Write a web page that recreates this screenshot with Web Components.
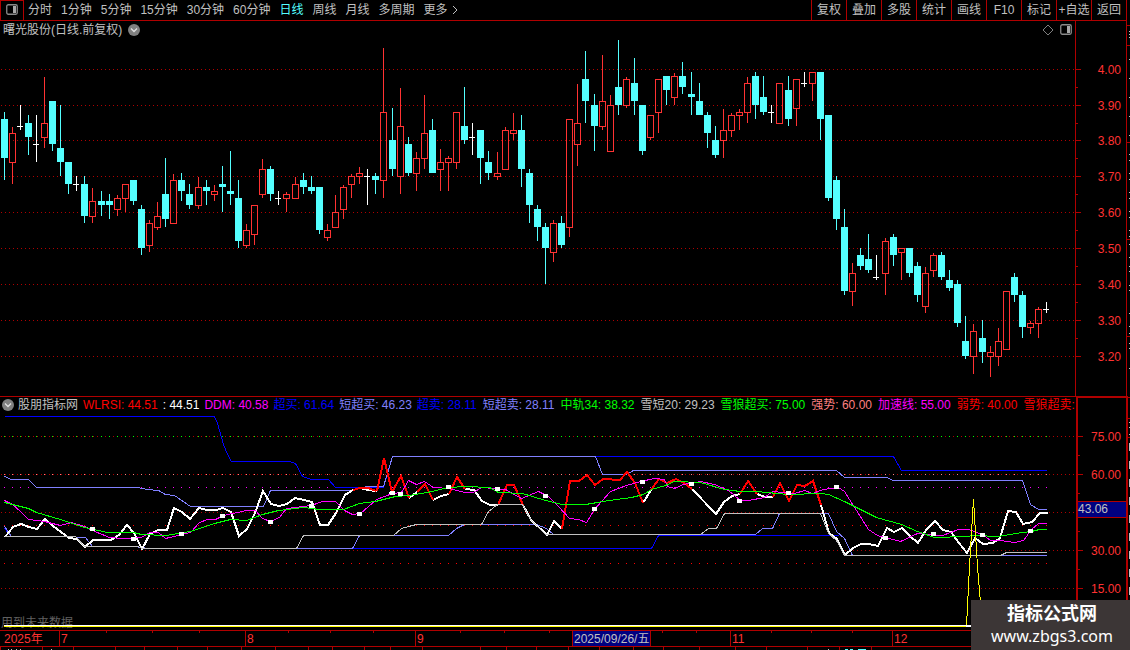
<!DOCTYPE html>
<html lang="zh-CN">
<head>
<meta charset="utf-8">
<title>曙光股份 日线</title>
<style>
  body { margin: 0; background: #000; color: #c0c0c0; font: 12px/16px "Liberation Sans", "Noto Sans CJK SC", sans-serif; }
</style>
</head>
<body>
<trade-terminal></trade-terminal>
<script>
const define = (name, html, setup) => customElements.define(name, class extends HTMLElement {
  connectedCallback() {
    if (this.shadowRoot) return;
    const root = this.attachShadow({ mode: 'open' });
    const t = document.createElement('template');
    t.innerHTML = html;
    root.append(t.content.cloneNode(true));
    if (setup) setup(this, root);
  }
});

/* ---------- small icons ---------- */
define('panel-icon', `
<style>:host{display:block;width:12px;height:11px}svg{display:block}</style>
<svg width="12" height="11"><rect x=".75" y=".75" width="10.5" height="9.5" rx="1.5" fill="none" stroke="#8a8a8a" stroke-width="1.3"/><rect x="7" y="2" width="3" height="7" fill="#a8a8a8"/></svg>`);

define('chevron-badge', `
<style>:host{display:block;width:12px;height:12px;flex:none}svg{display:block}</style>
<svg width="12" height="12"><circle cx="6" cy="6" r="6" fill="#808080"/><path d="M3 4.500 6 7.500 9 4.500" fill="none" stroke="#e0e0e0" stroke-width="1.3"/></svg>`);

define('diamond-icon', `
<style>:host{display:block;width:12px;height:12px}svg{display:block}</style>
<svg width="12" height="12"><path d="M6 1 11 6 6 11 1 6Z" fill="none" stroke="#808080"/></svg>`);

/* ---------- toolbar ---------- */
define('period-button', `
<style>
:host{display:block}
:host([selected]){color:#54ffff}
button{display:flex;align-items:center;gap:4px;background:none;border:0;padding:0;margin:0;font:inherit;color:inherit;white-space:nowrap}
</style>
<button type="button"><slot></slot></button>`);

define('tool-button', `
<style>
:host{display:block;width:34px;border-left:1px solid #b00000}
button{display:block;width:100%;height:100%;background:none;border:0;padding:0;font:inherit;color:inherit;white-space:nowrap}
</style>
<button type="button"><slot></slot></button>`);

define('tool-bar', `
<style>
:host{display:flex;height:20px;border-bottom:1px solid #b00000;justify-content:space-between}
.left,.periods,.tools{display:flex}
.box{box-sizing:border-box;width:24px;border:solid #b00000;border-width:1px 1px 0;display:flex;align-items:center;justify-content:center;background:none;padding:0 1px 3px 0}
.periods{align-items:center;gap:9px;padding-left:4px}
svg{display:block}
</style>
<div class="left">
  <button class="box" type="button" aria-label="面板"><panel-icon></panel-icon></button>
  <div class="periods">
    <period-button>分时</period-button><period-button>1分钟</period-button><period-button>5分钟</period-button>
    <period-button>15分钟</period-button><period-button>30分钟</period-button><period-button>60分钟</period-button>
    <period-button selected>日线</period-button><period-button>周线</period-button><period-button>月线</period-button>
    <period-button>多周期</period-button><period-button>更多<svg width="6" height="10"><path d="M1 1 5 5 1 9" fill="none" stroke="#c0c0c0"/></svg></period-button>
  </div>
</div>
<div class="tools">
  <tool-button>复权</tool-button><tool-button>叠加</tool-button><tool-button>多股</tool-button><tool-button>统计</tool-button><tool-button>画线</tool-button><tool-button>F10</tool-button><tool-button>标记</tool-button><tool-button>+自选</tool-button><tool-button>返回</tool-button>
</div>`);

/* ---------- value axis ---------- */
define('value-axis', `
<style>
:host{display:block;width:50px;border-left:1px solid #b00000;position:relative}
:host([heavy]){width:48px;border-left:2px solid #b00000;border-top:1px solid #b00000}
svg{display:block;width:100%;height:100%}
text{fill:#ff3232;text-anchor:end}
.tick{fill:#b00000}
.tag{position:absolute;left:0;right:0;top:103px;height:15px;line-height:15px;background:#000080;border:solid #b00000;border-width:1px 0}
</style>
<svg shape-rendering="crispEdges"></svg>`, (host, root) => {
  const svg = root.querySelector('svg');
  const right = host.hasAttribute('heavy') ? 43 : 45;
  let out = '';
  host.getAttribute('labels').split(' ').map(s => s.split('@')).forEach(([label, y]) => {
    out += `<rect class="tick" x="0" y="${y}" width="5" height="1"/><text x="${right}" y="${+y + 5}">${label}</text>`;
  });
  (host.getAttribute('minor') || '').split(' ').forEach(y => out += `<rect class="tick" x="0" y="${y}" width="2" height="1"/>`);
  svg.innerHTML = out;
  if (host.hasAttribute('tag')) root.append(Object.assign(document.createElement('div'), { className: 'tag', textContent: host.getAttribute('tag') }));
});

/* ---------- candles: kind (c falling, r rising, w flat), high, body top, body bottom, low ---------- */
const candles = `c112,119,158,180 r127,133,163,184 w105,126,126,130 c115,123,137,155 w115,144,144,162 r77,123,138,148 c101,101,144,151 c105,148,162,176 c162,162,184,194 w176,184,184,191
c176,184,216,223 r188,201,217,223 c191,201,205,216 c194,201,205,219 r195,198,210,216 r184,184,199,212 c180,180,201,205 c205,209,248,255 r220,223,246,252 r202,216,228,230
c158,194,219,227 r174,180,224,224 c173,180,191,201 c184,194,205,209 r177,187,206,209 c180,187,191,205 r185,191,195,201 c166,184,187,212 c151,191,194,205 c180,198,241,248
r224,230,246,248 r205,205,235,245 r159,169,195,198 c166,169,194,201 w191,198,198,205 r192,194,199,212 r177,184,199,199 c173,180,187,194 c176,187,191,194 c187,187,230,234
r224,230,238,241 r195,212,228,228 r185,187,210,219 r174,176,185,198 r167,173,177,184 w169,176,176,205 c173,176,180,194 r48,112,181,198 c108,140,169,176 r88,126,177,194
c137,144,173,176 r152,158,174,191 r95,133,159,169 c119,130,173,173 r149,162,170,191 r156,158,163,191 r112,112,163,169 c87,126,140,144 w123,137,137,155 c130,130,158,184
c151,162,173,180 r152,173,177,180 r127,130,170,170 r113,130,134,140 c115,130,169,187 c169,173,205,223 c205,209,227,241 c223,227,248,284 r220,223,253,262 c216,223,245,248
r119,119,228,237 r84,123,145,166 c51,79,101,123 c94,105,126,151 r55,101,127,130 r95,105,152,152 c40,87,105,115 r77,79,106,108 c58,83,101,115 c105,105,151,155
r115,115,138,140 r79,79,113,133 c76,76,90,105 r73,76,98,105 c62,76,87,94 c72,94,97,115 c83,101,115,115 c112,115,133,148 c126,140,155,158 r109,130,141,158
r113,115,131,137 r109,112,116,130 r77,83,113,123 c72,76,105,119 c76,97,112,115 w105,112,112,123 r83,83,124,124 c76,90,119,126 r79,79,109,126 w72,83,83,87
r72,72,84,101 c72,72,119,140 c115,115,198,201 c176,180,219,230 c209,227,291,295 r263,273,292,306 c248,255,266,270 c234,259,270,273 w255,277,277,280 r238,241,274,295
c234,237,255,266 r248,248,253,280 c248,248,273,277 c262,266,295,302 r267,273,307,313 r253,255,271,277 c252,255,277,280 c270,280,288,291 c280,284,323,327 c316,341,356,359
r324,331,357,374 c320,338,352,363 r346,352,357,377 r328,341,357,366 r291,291,350,350 c273,277,295,302 c291,295,327,338 r321,323,328,334 r307,309,324,338 w302,309,309,313`
  .split(/\s+/).map(s => [s[0], ...s.slice(1).split(',').map(Number)]);
const slot = i => Math.floor(1.045 + 8.0825 * i);

define('candle-chart', `
<style>:host{display:block}svg{display:block;width:100%;height:358px}</style>
<svg shape-rendering="crispEdges" role="img" aria-label="日线K线图"></svg>`, (host, root) => {
  let out = '<g transform="translate(0 -38)">';
  [69, 105, 140, 176, 212, 248, 284, 320, 356].forEach(y => out += `<line x1="1" x2="100%" y1="${y + .5}" y2="${y + .5}" stroke="#b00000" stroke-dasharray="1 3"/>`);
  candles.forEach(([k, hi, top, bot, lo], i) => {
    const x = slot(i), c = { c: '#54ffff', r: '#ff3232', w: '#fff' }[k];
    if (k === 'r') {
      out += `<path fill="${c}" d="M${x + 3} ${hi}h1V${top}h-1zM${x + 3} ${bot}h1V${lo}h-1z"/><rect x="${x + .5}" y="${top + .5}" width="6" height="${bot - top - 1}" fill="none" stroke="${c}"/>`;
    } else {
      out += `<rect x="${x + 3}" y="${hi}" width="1" height="${lo - hi}" fill="${c}"/>`;
      out += k === 'c' ? `<rect x="${x}" y="${top}" width="7" height="${bot - top}" fill="${c}"/>` : `<rect x="${x}" y="${top}" width="6" height="1" fill="${c}"/>`;
    }
  });
  root.querySelector('svg').innerHTML = out + '</g>';
});

define('price-pane', `
<style>
:host{display:flex}
.main{flex:1;min-width:0}
header{display:flex;align-items:center;height:17px;padding:0 3px;gap:6px}
.tools{margin-left:auto;display:flex;gap:6px;align-items:center}
</style>
<div class="main">
  <header><span>曙光股份(日线.前复权)</span><chevron-badge></chevron-badge><span class="tools"><diamond-icon></diamond-icon><panel-icon></panel-icon></span></header>
  <candle-chart></candle-chart>
</div>
<value-axis labels="4.00@48 3.90@84 3.80@119 3.70@155 3.60@191 3.50@227 3.40@263 3.30@299 3.20@335" minor="66 102 137 173 209 245 281 317"></value-axis>`);

/* ---------- indicator ---------- */
const lines = [
  ['#0000ff', 1, '4,416 214,416 217,423 223,444 227,454 231,461 289,461 295,463 302,476 311,479 328,479 335,487 383,487 392,456 893,456 901,470 1046,470'],
  ['#0000ff', 1, '4,528 11,536 65,536 85,537 92,546 135,546 147,548 651,548 658,535 838,535'],
  ['#8080ff', 1, '4,476 11,479 28,479 36,487 137,487 147,489 158,490 165,494 174,495 190,506 263,506 270,490 350,490 367,486 383,486 392,456 595,456 602,474 626,474 633,470 836,470 844,477 886,477 893,480 1022,480 1030,504 1038,509 1046,509'],
  ['#8080ff', 1, '4,526 11,536 65,536 85,537 92,546 135,546 147,548 352,548 359,535 448,535 456,528 464,524 536,524 546,528 553,534 755,534 762,528 772,528 779,513 828,513 836,531 844,538 852,555 1046,555'],
  ['#ffffff', 2, '4,536 12,526 20,523 28,526 36,528 44,518 52,525 60,531 68,537 76,538 84,546 92,539 110,539 118,534 126,524 133,532 141,548 149,533 157,529 166,529 173,507 181,511 189,518 198,507 206,509 215,509 222,507 230,511 238,535 246,528 254,512 262,490 270,503 278,505 286,503 294,497 303,499 311,501 319,524 327,524 335,512 344,494 352,489 359,487 367,489 376,490'],
  ['#ffffff', 2, '388,492 392,491'],
  ['#ffffff', 2, '408,497 416,491'],
  ['#ffffff', 2, '432,499 440,495 448,493'],
  ['#ffffff', 2, '464,488 473,489 481,500 489,504 497,504'],
  ['#ffffff', 2, '522,504 530,519 546,534 553,520 561,528'],
  ['#ffffff', 2, '642,502 650,489'],
  ['#ffffff', 2, '691,488 715,513 723,501 731,495 739,493'],
  ['#ffffff', 2, '756,493 764,496 772,496'],
  ['#ffffff', 2, '820,504 828,532 836,538 844,554 852,547 860,543 868,543 877,545 886,527 893,531 901,527 909,535 917,542 925,529 934,520 942,529 950,531 958,542 966,552 974,537 982,543 992,542 999,537 1007,510 1015,511 1022,523 1031,521 1039,512 1047,512'],
  ['#ff0000', 2, '352,489 359,487 367,487 375,490'],
  ['#ff0000', 2, '376,490 383,457 391,491 400,475 408,497'],
  ['#ff0000', 2, '416,491 424,483 432,499'],
  ['#ff0000', 2, '448,493 456,476 464,488'],
  ['#ff0000', 2, '497,504 506,484 513,484 522,504'],
  ['#ff0000', 2, '561,528 569,480 578,480 586,474 594,484 602,478 619,479 626,471 634,482 642,502'],
  ['#ff0000', 2, '650,489 658,478 666,482 675,478 683,482 691,488'],
  ['#ff0000', 2, '739,493 747,480 756,493'],
  ['#ff0000', 2, '772,496 779,482 788,500 796,484 804,485 812,480 820,504'],
  ['#c0c0c0', 1, '4,536 75,536 84,546 137,546 142,548 296,548 303,535 393,535 401,528 408,526 416,524 481,524 488,511 497,504 522,504 530,519 545,534 700,534 708,528 716,528 724,513 820,513 828,533 836,540 844,555 1000,555 1006,552 1046,552'],
  ['#ff00ff', 1, '4,500 12,504 20,511 28,519 44,521 60,525 71,522 84,526 92,530 109,537 122,538 141,537 149,532 158,532 165,538 190,532 199,522 207,519 215,519 223,515 246,510 255,510 262,518 270,521 279,517 286,508 311,505 322,501 335,501 344,510 352,514 360,513 376,499 392,493 401,492 408,480 416,484 424,481 433,487 449,488 464,492 473,492 481,487 505,489 521,498 538,491 548,496 558,506 569,518 578,519 586,522 594,509 610,491 626,485 640,481 654,478 664,479 667,486 674,488 683,484 700,481 714,484 728,490 740,500 748,500 764,497 772,491 794,493 804,490 812,493 823,489 838,487 844,491 868,529 877,535 900,541 917,533 942,535 950,532 958,529 968,529 982,534 990,540 1000,540 1014,542 1023,540 1031,529 1038,523 1046,523'],
  ['#00ff00', 1, '4,502 28,508 36,512 60,519 84,527 107,532 133,532 141,534 165,535 190,531 214,523 230,519 246,520 262,514 278,510 303,507 319,509 343,509 359,503 375,501 395,496 408,495 427,492 448,487 465,486 489,487 498,492 522,493 545,500 562,504 585,504 609,500 631,497 643,494 651,489 665,485 674,481 700,482 724,489 740,491 756,491 788,494 820,493 828,494 844,501 876,517 901,524 917,531 934,537 966,536 974,535 998,536 1015,533 1031,531 1039,529 1046,529'],
  ['#ffff00', 1, '966,626 969,566 973,499 977,566 982,626']
];
const marks = '92,528 133,538 181,533 222,515 270,521 311,505 359,513 392,492 400,493 448,486 497,488 545,495 594,508 642,481 691,483 739,500 788,492 836,486 885,537 933,533 982,534 1030,530';

define('indicator-chart', `
<style>:host{display:block}svg{display:block;width:100%;height:216px}text{fill:#606060}</style>
<svg shape-rendering="crispEdges" role="img" aria-label="指标图"></svg>`, (host, root) => {
  let out = '<g transform="translate(0 -414)">';
  [436, 474, 512, 550, 588].forEach(y => out += `<line x1="1" x2="100%" y1="${y + .5}" y2="${y + .5}" stroke="#b00000" stroke-dasharray="1 3"/>`);
  [[436, '#00ff00'], [474, '#ff8080'], [487, '#ff00ff'], [525, '#ff0000'], [563, '#ff0000']].forEach(([y, c]) => {
    candles.forEach((_, i) => out += `<rect x="${slot(i) + 3}" y="${y}" width="1" height="1" fill="${c}"/>`);
  });
  out += '<text x="1" y="627">用到未来数据</text>';
  lines.forEach(([c, w, pts]) => {
    const shifted = pts.split(' ').map(p => p.split(',').map(v => +v + w / 2).join()).join(' ');
    out += `<polyline points="${shifted}" fill="none" stroke="${c}" stroke-width="${w}"/>`;
  });
  marks.split(' ').forEach(p => { const [x, y] = p.split(','); out += `<rect x="${x - 2}" y="${y - 1}" width="5" height="4" fill="#fff"/>`; });
  out += '<rect x="4" y="625" width="1043" height="1" fill="#fff"/><rect x="966" y="626" width="81" height="1" fill="#fff"/><rect x="4" y="626" width="962" height="1" fill="#ff0"/>';
  root.querySelector('svg').innerHTML = out + '</g>';
});

define('legend-item', `<style>:host{display:block;white-space:nowrap}</style><slot></slot>`);

define('indicator-pane', `
<style>
:host{display:flex;border-top:1px solid #b00000}
.main{flex:1;min-width:0}
header,.bands,.levels{display:flex;align-items:center;gap:5px}
header{height:16px;padding:0 0 1px 2px;gap:6px;overflow:hidden}
.levels{gap:6px}
.name{display:flex;align-items:center;gap:4px;white-space:nowrap}
</style>
<div class="main">
  <header>
    <div class="bands">
      <span class="name"><chevron-badge></chevron-badge>股朋指标网</span>
      <legend-item style="color:#f00">WLRSI: 44.51</legend-item>
      <legend-item style="color:#fff">: 44.51</legend-item>
      <legend-item style="color:#f0f">DDM: 40.58</legend-item>
      <legend-item style="color:#00f">超买: 61.64</legend-item>
      <legend-item style="color:#8080ff">短超买: 46.23</legend-item>
      <legend-item style="color:#00f">超卖: 28.11</legend-item>
    </div>
    <div class="levels">
      <legend-item style="color:#8080ff">短超卖: 28.11</legend-item>
      <legend-item style="color:#0f0">中轨34: 38.32</legend-item>
      <legend-item style="color:#c0c0c0">雪短20: 29.23</legend-item>
      <legend-item style="color:#0f0">雪狼超买: 75.00</legend-item>
      <legend-item style="color:#ff8080">强势: 60.00</legend-item>
      <legend-item style="color:#f0f">加速线: 55.00</legend-item>
      <legend-item style="color:#f00">弱势: 40.00</legend-item>
      <legend-item style="color:#f00">雪狼超卖:</legend-item>
    </div>
  </header>
  <indicator-chart></indicator-chart>
</div>
<value-axis heavy tag="43.06" labels="75.00@38 60.00@76 30.00@152 15.00@190" minor="57 95 133 171 209"></value-axis>`);

/* ---------- date axis ---------- */
define('date-cell', `
<style>
:host{display:block;position:relative;box-sizing:border-box;border-left:1px solid #b00000;padding-left:1px;height:15px;line-height:16px;color:#ff3232;white-space:nowrap}
:host([first]){border-left:0;padding-left:4px}
:host([active]){background:#000080;color:#c0c0c0}
i{position:absolute;top:0;width:1px;height:2px;background:#b00000}
</style><slot></slot>`, (host, root) => {
  (host.getAttribute('ticks') || '').split(' ').filter(Boolean).forEach(x => {
    const i = document.createElement('i'); i.style.left = x + 'px'; root.append(i);
  });
});

define('date-axis', `
<style>
:host{display:grid;grid-template-columns:59px 186px 170px 157px 78px 80px 162px 1fr;border:solid #b00000;border-width:1px 0}
</style>
<date-cell first>2025年</date-cell><date-cell ticks="46 92 139">7</date-cell><date-cell ticks="42 84 127">8</date-cell><date-cell ticks="44 88 133">9</date-cell>
<date-cell active>2025/09/26/五</date-cell><date-cell ticks="11 45"></date-cell><date-cell ticks="40 80 121">11</date-cell><date-cell>12</date-cell>`);

define('status-strip', `
<style>:host{display:block}svg{display:block;width:100%;height:3px}</style><svg shape-rendering="crispEdges"></svg>`, (host, root) => {
  root.querySelector('svg').innerHTML = [0, 42, 73, 115, 144, 177, 207, 241, 275, 308, 332, 364, 390, 422, 480, 506, 536, 568, 599, 633, 663, 699, 735, 766, 807, 839, 871]
    .map(x => `<rect x="${x}" width="1" height="3" fill="#b00000"/>`).join('') +
    [8, 11, 16, 20, 51, 828].map(x => `<rect x="${x}" y="2" width="1" height="1" fill="#c0c0c0"/>`).join('') +
    [[845, 3], [850, 3], [858, 8]].map(([x, w]) => `<rect x="${x}" y="2" width="${w}" height="1" fill="#54ffff"/>`).join('');
});

/* ---------- edge of the neighbouring quote list ---------- */
define('quote-strip', `
<style>:host{display:block}svg{display:block;width:4px;height:650px}</style><svg shape-rendering="crispEdges"></svg>`, (host, root) => {
  let out = '<g fill="#b00000"><rect width="1" height="396"/><rect y="396" width="2" height="254"/>';
  [25, 45, 142, 239, 336, 397, 418, 437].forEach(y => out += `<rect y="${y}" width="4" height="1"/>`);
  out += '</g><g fill="#c0c0c0">';
  [31, 34, 37, 59, 78, 97, 116, 135, 154, 160, 173, 179, 192, 198, 211, 217, 230, 236, 244, 257, 266, 271, 285, 290, 313, 326, 333, 343, 348, 368, 422, 427, 434].forEach(y => out += `<rect x="3" y="${y}" width="1" height="1"/>`);
  for (let y = 443; y < 600; y += 18) out += `<rect x="3" y="${y}" width="1" height="8"/>`;
  root.querySelector('svg').innerHTML = out + '</g>';
});

define('water-mark', `
<style>
:host{position:fixed;right:0;bottom:0;box-sizing:border-box;width:159px;height:50px;padding:3px 0 0 3px;background:#3c3636;color:#fff;display:flex;flex-direction:column;align-items:center}
strong{font:700 18px/22px "Liberation Sans","Noto Sans CJK SC",sans-serif}
a{font:16px/22px "Noto Sans",sans-serif;color:inherit;text-decoration:none}
</style>
<strong>指标公式网</strong><a href="#">www.zbgs3.com</a>`);

define('trade-terminal', `
<style>
:host{display:grid;grid-template-columns:minmax(0,1fr) 4px;overflow:hidden}
main{min-width:0}
</style>
<main>
  <tool-bar></tool-bar>
  <price-pane></price-pane>
  <indicator-pane></indicator-pane>
  <date-axis></date-axis>
  <status-strip></status-strip>
</main>
<quote-strip></quote-strip>
<water-mark></water-mark>`);
</script>
</body>
</html>
